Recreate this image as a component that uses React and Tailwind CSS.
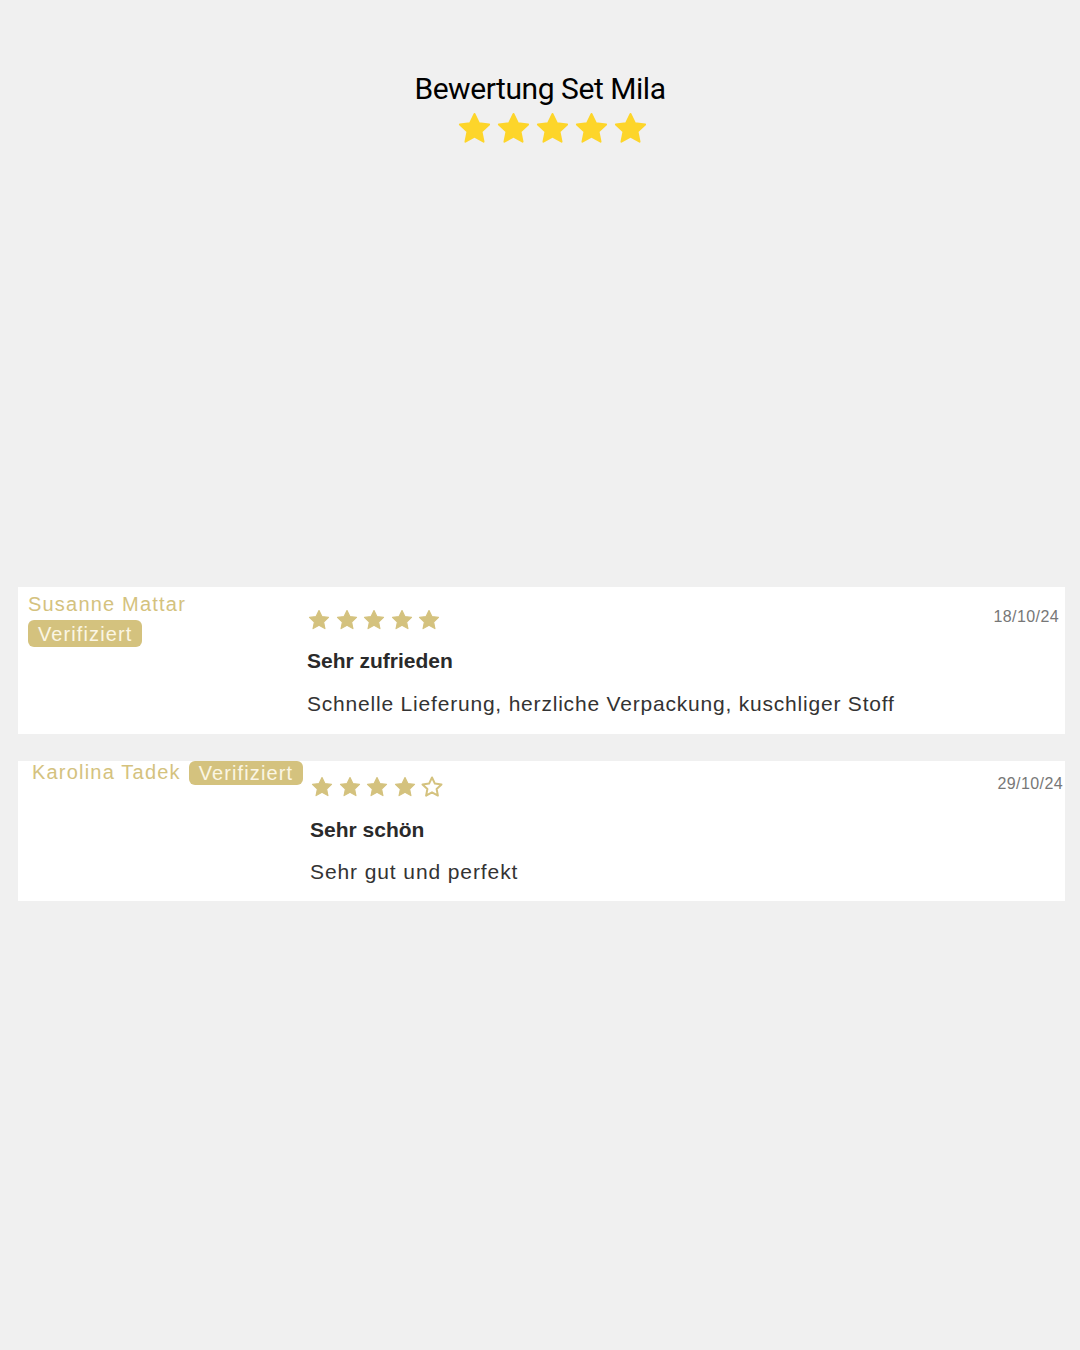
import React from "react";

const STAR = "M12 2.5l2.9 6.1 6.6.8-4.9 4.6 1.3 6.6L12 17.3l-5.9 3.3 1.3-6.6-4.9-4.6 6.6-.8z";

function Star({ size, color, outline }) {
  return (
    <svg width={size} height={size} viewBox="0 0 24 24">
      <path
        d={STAR}
        fill={outline ? "none" : color}
        stroke={color}
        strokeWidth={outline ? 2 : 1.2}
        strokeLinejoin="round"
      />
    </svg>
  );
}

function Stars({ n, size, color, gap, filled = 5 }) {
  return (
    <div className={`flex ${gap}`}>
      {Array.from({ length: n }).map((_, i) => (
        <Star key={i} size={size} color={color} outline={i >= filled} />
      ))}
    </div>
  );
}

const font = { fontFamily: '"Liberation Sans", Arial, sans-serif' };

export default function App() {
  return (
    <div className="min-h-[1350px] w-[1080px] bg-[#f0f0f0]" style={font}>
      <div className="flex flex-col items-center pt-[69px]">
        <h1 className="text-[30px] leading-[40px] text-black tracking-[-0.45px]" style={{ fontFamily: 'Roboto, sans-serif' }}>
          Bewertung Set Mila
        </h1>
        <div className="mt-[1px] ml-[24px] flex gap-[2px]">
          {[0, 1, 2, 3, 4].map((i) => (
            <Star key={i} size={37} color="#fdd52a" />
          ))}
        </div>
      </div>

      <div className="mt-[440px] ml-[18px] w-[1047px] flex flex-col gap-[27px]">
        {/* Card 1 */}
        <div className="bg-white h-[147px] flex">
          <div className="w-[289px] pl-[10px] pt-[4px] flex flex-col items-start">
            <div className="text-[20px] leading-[26px] text-[#d4c27e] tracking-[1.2px]">Susanne Mattar</div>
            <div className="mt-[3px] rounded-[6px] bg-[#d4c27e] px-[10px] h-[27px] flex items-center text-[20px] text-[#fbf6e4] tracking-[1.1px]">
              Verifiziert
            </div>
          </div>
          <div className="flex-1 flex flex-col pt-[21px]">
            <Stars n={5} size={24} color="#d4c27e" gap="gap-[3.5px]" />
            <div className="mt-[17px] text-[21px] leading-[24px] font-bold text-[#2a2a2a]">Sehr zufrieden</div>
            <div className="mt-[19px] text-[21px] leading-[24px] text-[#333] tracking-[0.8px]">
              Schnelle Lieferung, herzliche Verpackung, kuschliger Stoff
            </div>
          </div>
          <div className="pr-[6px] pt-[20px] text-[16px] leading-[20px] text-[#777] tracking-[0.4px]">18/10/24</div>
        </div>

        {/* Card 2 */}
        <div className="bg-white h-[140px] flex">
          <div className="w-[292px] pl-[14px] flex items-start">
            <div className="-mt-[2px] text-[20px] leading-[26px] text-[#d4c27e] tracking-[1.2px]">Karolina Tadek</div>
            <div className="ml-[8px] rounded-[6px] bg-[#d4c27e] px-[10px] h-[24px] flex items-center text-[20px] text-[#fbf6e4] tracking-[1.1px]">
              Verifiziert
            </div>
          </div>
          <div className="flex-1 flex flex-col pt-[14px]">
            <Stars n={5} size={24} color="#d4c27e" gap="gap-[3.5px]" filled={4} />
            <div className="mt-[19px] text-[21px] leading-[24px] font-bold text-[#2a2a2a]">Sehr schön</div>
            <div className="mt-[18px] text-[21px] leading-[24px] text-[#333] tracking-[0.9px]">Sehr gut und perfekt</div>
          </div>
          <div className="pr-[2px] pt-[13px] text-[16px] leading-[20px] text-[#777] tracking-[0.4px]">29/10/24</div>
        </div>
      </div>
    </div>
  );
}
